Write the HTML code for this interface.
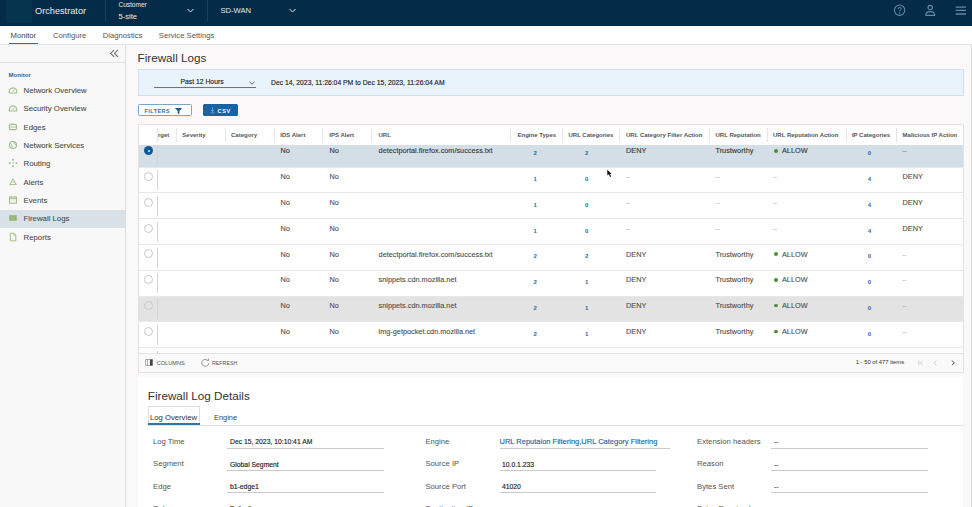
<!DOCTYPE html>
<html><head><meta charset="utf-8">
<style>
*{margin:0;padding:0;box-sizing:border-box}
html,body{width:972px;height:507px;overflow:hidden;background:#faf8f9;font-family:"Liberation Sans",sans-serif;color:#333}
.a{position:absolute;white-space:nowrap}
#hdr{position:absolute;left:0;top:0;width:972px;height:26px;background:#042b47}
#logo{position:absolute;left:6px;top:0;width:26px;height:23px;background:#05344f}
.hsep{position:absolute;top:0;width:1px;height:21px;background:#1d3f5a}
.ht{color:#e6ecf1}
#subnav{position:absolute;z-index:2;left:0;top:26px;width:972px;height:19px;background:#fff;border-bottom:1px solid #e4e4e4}
.sn{position:absolute;top:5px;font-size:7.7px;color:#555}
#side{position:absolute;left:0;top:44px;width:126px;height:463px;background:#f8f8f8;border-right:1px solid #ddd}
.si{position:absolute;left:0;width:125px;height:18px}
.si span{position:absolute;left:23.5px;top:4.6px;font-size:7.8px;color:#4a4a4a;-webkit-text-stroke-width:0.08px}
.si i{position:absolute;left:8px;top:3.5px;width:10px;height:10px}.si i svg{display:block}
.th{top:132px;font-size:6px;font-weight:bold;color:#555}
.td{font-size:7.3px;color:#4d4d4d;-webkit-text-stroke-width:0.1px}
.dd{font-size:5.8px;color:#4a4a4a;-webkit-text-stroke-width:0.1px}
.td.s{color:#333}
.tn{font-size:6px;font-weight:bold;color:#2a6aa3;text-align:center}
.ft{font-size:5.6px;color:#555}
.dl{font-size:7.7px;color:#555}
.dv{font-size:6.8px;color:#222;-webkit-text-stroke-width:0.14px}
.st{-webkit-text-stroke-width:0.14px}
</style></head><body>
<div id="hdr">
  <div id="logo"></div>
  <div class="a ht" style="left:35px;top:5.8px;font-size:9.2px">Orchestrator</div>
  <div class="hsep" style="left:105px"></div>
  <div class="a ht" style="left:118.5px;top:1px;font-size:6.5px">Customer</div>
  <div class="a ht" style="left:118.5px;top:11.5px;font-size:7.6px">5-site</div>
  <svg class="a" style="left:186px;top:7px" width="9" height="7" viewBox="0 0 9 7"><path d="M1.5 2 L4.5 5 L7.5 2" fill="none" stroke="#dfe6ec" stroke-width="1"/></svg>
  <div class="hsep" style="left:207px"></div>
  <div class="a ht" style="left:220.5px;top:5.6px;font-size:7.6px">SD-WAN</div>
  <svg class="a" style="left:288px;top:7px" width="9" height="7" viewBox="0 0 9 7"><path d="M1.5 2 L4.5 5 L7.5 2" fill="none" stroke="#dfe6ec" stroke-width="1"/></svg>
  <svg class="a" style="left:892px;top:3px" width="15" height="15" viewBox="0 0 15 15"><circle cx="7.6" cy="7.2" r="5.2" fill="none" stroke="#618ba8" stroke-width="1.1"/><path d="M6 6 Q6 4.4 7.6 4.4 Q9.2 4.4 9.2 5.8 Q9.2 6.8 7.7 7.4 L7.7 8.5" fill="none" stroke="#618ba8" stroke-width="1"/><circle cx="7.7" cy="10" r="0.65" fill="#618ba8"/></svg>
  <svg class="a" style="left:923px;top:3px" width="15" height="15" viewBox="0 0 15 15"><circle cx="7.2" cy="4.6" r="2.2" fill="none" stroke="#618ba8" stroke-width="1.1"/><path d="M2.7 12.4 Q2.7 8.6 7.2 8.6 Q11.7 8.6 11.7 12.4 Z" fill="none" stroke="#618ba8" stroke-width="1.1"/></svg>
  <svg class="a" style="left:955px;top:5px" width="12" height="11" viewBox="0 0 12 11"><path d="M0.7 2.1 H11 M0.7 5.4 H11 M0.7 9 H11" stroke="#618ba8" stroke-width="1.3"/></svg>
</div>
<div id="subnav">
  <div class="sn" style="left:10.5px;color:#444">Monitor</div>
  <div class="sn" style="left:53px">Configure</div>
  <div class="sn" style="left:102.7px">Diagnostics</div>
  <div class="sn" style="left:158.8px">Service Settings</div>
  <div class="a" style="left:9px;top:16.6px;width:29px;height:1.5px;background:#2f73ab"></div>
</div>
<div id="side">
  <svg class="a" style="left:108.5px;top:5px" width="11" height="9" viewBox="0 0 11 9"><path d="M5.2 0.9 L1.6 4.4 L5.2 7.9 M9 0.9 L5.4 4.4 L9 7.9" fill="none" stroke="#6a6a6a" stroke-width="1.05"/></svg>
  <div class="a" style="left:0;top:18px;width:125px;height:1px;background:#e3e3e3"></div>
  <div class="a" style="left:8.5px;top:27px;font-size:6.1px;font-weight:bold;color:#2a66a0">Monitor</div>
  <div class="si" style="top:37.50px"><i><svg width="10" height="10" viewBox="0 0 10 10"><path d="M1.3 8 A3.9 3.9 0 1 1 8.7 8 Z" fill="none" stroke="#a2c08a" stroke-width="1.1"/><path d="M4.9 6.6 L6.6 4.6" stroke="#a2c08a" stroke-width="1"/></svg></i><span>Network Overview</span></div>
  <div class="si" style="top:55.83px"><i><svg width="10" height="10" viewBox="0 0 10 10"><path d="M1.3 8 A3.9 3.9 0 1 1 8.7 8 Z" fill="none" stroke="#a2c08a" stroke-width="1.1"/><path d="M4.9 6.6 L6.6 4.6" stroke="#a2c08a" stroke-width="1"/></svg></i><span>Security Overview</span></div>
  <div class="si" style="top:74.16px"><i><svg width="10" height="10" viewBox="0 0 10 10"><rect x="1.3" y="2.4" width="7.2" height="5.2" rx="1" fill="none" stroke="#a2c08a" stroke-width="1.1"/><path d="M1.5 5 H8.3" stroke="#a2c08a" stroke-width="0.9"/></svg></i><span>Edges</span></div>
  <div class="si" style="top:92.49px"><i><svg width="10" height="10" viewBox="0 0 10 10"><circle cx="5" cy="5" r="3.5" fill="none" stroke="#a2c08a" stroke-width="1.2"/><path d="M2.5 3.5 Q5 5 4 8 M5.5 1.8 Q6 4 8.3 5" fill="none" stroke="#a2c08a" stroke-width="1"/></svg></i><span>Network Services</span></div>
  <div class="si" style="top:110.82px"><i><svg width="10" height="10" viewBox="0 0 10 10"><circle cx="5" cy="1.8" r="1" fill="#a2c08a"/><circle cx="5" cy="8.2" r="1" fill="#a2c08a"/><circle cx="1.6" cy="5" r="1" fill="#a2c08a"/><circle cx="8.4" cy="5" r="1" fill="#a2c08a"/><circle cx="5" cy="5" r="0.7" fill="#a2c08a"/></svg></i><span>Routing</span></div>
  <div class="si" style="top:129.15px"><i><svg width="10" height="10" viewBox="0 0 10 10"><path d="M5 1.8 L8.3 7.6 H1.7 Z" fill="none" stroke="#a2c08a" stroke-width="1"/><path d="M5 4.2 V5.9" stroke="#a2c08a" stroke-width="0.8"/></svg></i><span>Alerts</span></div>
  <div class="si" style="top:147.48px"><i><svg width="10" height="10" viewBox="0 0 10 10"><rect x="1.5" y="2" width="7" height="6.3" fill="#eef2e6" stroke="#a2c08a" stroke-width="1"/><path d="M1.5 3.6 H8.5 M3.2 1 V2.6 M6.8 1 V2.6" stroke="#a2c08a" stroke-width="0.9"/></svg></i><span>Events</span></div>
  <div class="si" style="top:165.81px;background:#d9e1e8"><i><svg width="10" height="10" viewBox="0 0 10 10"><rect x="1.3" y="2.3" width="7.4" height="5.4" fill="#86ab62"/><path d="M1.3 4.1 H8.7 M1.3 5.9 H8.7 M3.6 2.3 V4.1 M6.3 2.3 V4.1 M5 4.1 V5.9 M3.6 5.9 V7.7 M6.3 5.9 V7.7" stroke="#b9cfa1" stroke-width="0.5"/></svg></i><span>Firewall Logs</span></div>
  <div class="si" style="top:184.14px"><i><svg width="10" height="10" viewBox="0 0 10 10"><path d="M2.3 1.2 H6 L7.8 3 V8.8 H2.3 Z" fill="none" stroke="#a2c08a" stroke-width="1"/><path d="M5.8 1.2 V3.2 H7.8" fill="none" stroke="#a2c08a" stroke-width="0.8"/></svg></i><span>Reports</span></div>
</div>
<div id="main">
  <div class="a" style="left:137.5px;top:51px;font-size:11.7px;color:#333">Firewall Logs</div>
  <div class="a" style="left:138px;top:69px;width:826px;height:27px;background:#e9f3fc;border:1px solid #cfdfec"></div>
  <div class="a st" style="left:180.5px;top:78px;font-size:6.8px;color:#222">Past 12 Hours</div>
  <div class="a" style="left:154px;top:86.5px;width:102px;height:1px;background:#6f7478"></div>
  <svg class="a" style="left:248px;top:79.5px" width="8" height="6" viewBox="0 0 8 6"><path d="M1.5 1.8 L4 4.2 L6.5 1.8" fill="none" stroke="#555" stroke-width="0.9"/></svg>
  <div class="a st" style="left:271px;top:78.8px;font-size:6.8px;color:#222">Dec 14, 2023, 11:26:04 PM to Dec 15, 2023, 11:26:04 AM</div>
  <div class="a" style="left:138px;top:104px;width:54px;height:12px;border:1px solid #7fa5c6;border-radius:1.5px;background:#fff"></div>
  <div class="a" style="left:144.5px;top:107.5px;font-size:5.4px;font-weight:bold;color:#2f6ea5;letter-spacing:0.5px">FILTERS</div>
  <svg class="a" style="left:173.5px;top:107px" width="9" height="9" viewBox="0 0 9 9"><path d="M0.9 1 H8.2 L5.4 4 V6.8 L3.7 6.8 V4 Z" fill="#1e5a8e"/></svg>
  <div class="a" style="left:202.5px;top:104px;width:35.5px;height:12px;background:#1863a2;border-radius:1.5px"></div>
  <svg class="a" style="left:209px;top:106px" width="7" height="8" viewBox="0 0 7 8"><path d="M3.5 1.2 V5.6 M1.9 4 L3.5 5.6 L5.1 4 M1.4 6.9 H5.6" fill="none" stroke="#8db2d4" stroke-width="0.7"/></svg>
  <div class="a" style="left:217.5px;top:107.5px;font-size:5.6px;font-weight:bold;color:#fff;letter-spacing:0.6px">CSV</div>
<div class="a" style="left:971px;top:45px;width:1px;height:462px;background:#dadada"></div>
<div class="a" style="left:138px;top:124px;width:825.5px;height:248.5px;background:#fff;border:1px solid #e3e3e3"></div>
<div class="a" style="left:157px;top:128px;width:1px;height:14px;background:#e6e6e6"></div>
<div class="a" style="left:176px;top:128px;width:1px;height:14px;background:#e6e6e6"></div>
<div class="a" style="left:224.5px;top:128px;width:1px;height:14px;background:#e6e6e6"></div>
<div class="a" style="left:273.5px;top:128px;width:1px;height:14px;background:#e6e6e6"></div>
<div class="a" style="left:322px;top:128px;width:1px;height:14px;background:#e6e6e6"></div>
<div class="a" style="left:371px;top:128px;width:1px;height:14px;background:#e6e6e6"></div>
<div class="a" style="left:510px;top:128px;width:1px;height:14px;background:#e6e6e6"></div>
<div class="a" style="left:562px;top:128px;width:1px;height:14px;background:#e6e6e6"></div>
<div class="a" style="left:619px;top:128px;width:1px;height:14px;background:#e6e6e6"></div>
<div class="a" style="left:709px;top:128px;width:1px;height:14px;background:#e6e6e6"></div>
<div class="a" style="left:767px;top:128px;width:1px;height:14px;background:#e6e6e6"></div>
<div class="a" style="left:846px;top:128px;width:1px;height:14px;background:#e6e6e6"></div>
<div class="a" style="left:896px;top:128px;width:1px;height:14px;background:#e6e6e6"></div>
<div class="a th" style="left:158px">rget</div>
<div class="a th" style="left:182.3px">Severity</div>
<div class="a th" style="left:231px">Category</div>
<div class="a th" style="left:280.3px">IDS Alert</div>
<div class="a th" style="left:329.3px">IPS Alert</div>
<div class="a th" style="left:378.5px">URL</div>
<div class="a th" style="left:511px;width:51.60000000000002px;text-align:center">Engine Types</div>
<div class="a th" style="left:562.6px;width:56.69999999999993px;text-align:center">URL Categories</div>
<div class="a th" style="left:626px">URL Category Filter Action</div>
<div class="a th" style="left:715.5px">URL Reputation</div>
<div class="a th" style="left:773px">URL Reputation Action</div>
<div class="a th" style="left:846px;width:50px;text-align:center">IP Categories</div>
<div class="a th" style="left:902.6px">Malicious IP Action</div>
<div class="a" style="left:139px;top:144.7px;width:823.5px;height:22.900000000000034px;background:#d4dee6;border-bottom:1px solid #e8e8e8"></div>
<div class="a" style="left:157px;top:144.7px;width:1px;height:19.600000000000033px;background:#d4d4d4"></div>
<div class="a" style="left:144.0px;top:146.10000000000002px;width:9px;height:9px;border-radius:50%;background:#0f5a98"></div>
<div class="a" style="left:147.5px;top:149.60000000000002px;width:2px;height:2px;border-radius:50%;background:#e8eef4"></div>
<div class="a td s" style="left:280.4px;top:146.4px">No</div>
<div class="a td s" style="left:329.4px;top:146.4px">No</div>
<div class="a td s" style="left:378.6px;top:146.4px">detectportal.firefox.com/success.txt</div>
<div class="a tn" style="left:525.1px;width:20px;top:150.20000000000002px">2</div>
<div class="a tn" style="left:576.6px;width:20px;top:150.20000000000002px">2</div>
<div class="a td s" style="left:626px;top:146.4px">DENY</div>
<div class="a td s" style="left:715.5px;top:146.4px">Trustworthy</div>
<div class="a" style="left:774px;top:148.90000000000003px;width:3.8px;height:3.8px;border-radius:50%;background:#4b8f35"></div>
<div class="a td s" style="left:782px;top:146.4px">ALLOW</div>
<div class="a tn" style="left:859.3px;width:20px;top:150.20000000000002px">0</div>
<div class="a dd" style="left:902.6px;top:148.4px;color:#444">--</div>
<div class="a" style="left:139px;top:167.60000000000002px;width:823.5px;height:25.80000000000001px;background:#fff;border-bottom:1px solid #e8e8e8"></div>
<div class="a" style="left:157px;top:170.20000000000002px;width:1px;height:19.900000000000016px;background:#d4d4d4"></div>
<div class="a" style="left:144.0px;top:171.90000000000003px;width:9px;height:9px;border-radius:50%;border:1px solid #c9c9c9"></div>
<div class="a td" style="left:280.4px;top:172.20000000000002px">No</div>
<div class="a td" style="left:329.4px;top:172.20000000000002px">No</div>
<div class="a tn" style="left:525.1px;width:20px;top:176.00000000000003px">1</div>
<div class="a tn" style="left:576.6px;width:20px;top:176.00000000000003px">0</div>
<div class="a dd" style="left:626px;top:174.20000000000002px;color:#8a8a8a">--</div>
<div class="a dd" style="left:715.5px;top:174.20000000000002px;color:#8a8a8a">--</div>
<div class="a dd" style="left:773px;top:174.20000000000002px;color:#8a8a8a">--</div>
<div class="a tn" style="left:859.3px;width:20px;top:176.00000000000003px">4</div>
<div class="a td" style="left:902.6px;top:172.20000000000002px">DENY</div>
<div class="a" style="left:139px;top:193.4px;width:823.5px;height:25.80000000000001px;background:#fff;border-bottom:1px solid #e8e8e8"></div>
<div class="a" style="left:157px;top:196.0px;width:1px;height:19.900000000000016px;background:#d4d4d4"></div>
<div class="a" style="left:144.0px;top:197.70000000000002px;width:9px;height:9px;border-radius:50%;border:1px solid #c9c9c9"></div>
<div class="a td" style="left:280.4px;top:198.0px">No</div>
<div class="a td" style="left:329.4px;top:198.0px">No</div>
<div class="a tn" style="left:525.1px;width:20px;top:201.8px">1</div>
<div class="a tn" style="left:576.6px;width:20px;top:201.8px">0</div>
<div class="a dd" style="left:626px;top:200.0px;color:#8a8a8a">--</div>
<div class="a dd" style="left:715.5px;top:200.0px;color:#8a8a8a">--</div>
<div class="a dd" style="left:773px;top:200.0px;color:#8a8a8a">--</div>
<div class="a tn" style="left:859.3px;width:20px;top:201.8px">4</div>
<div class="a td" style="left:902.6px;top:198.0px">DENY</div>
<div class="a" style="left:139px;top:219.20000000000002px;width:823.5px;height:25.80000000000001px;background:#fff;border-bottom:1px solid #e8e8e8"></div>
<div class="a" style="left:157px;top:221.8px;width:1px;height:19.900000000000016px;background:#d4d4d4"></div>
<div class="a" style="left:144.0px;top:223.50000000000003px;width:9px;height:9px;border-radius:50%;border:1px solid #c9c9c9"></div>
<div class="a td" style="left:280.4px;top:223.8px">No</div>
<div class="a td" style="left:329.4px;top:223.8px">No</div>
<div class="a tn" style="left:525.1px;width:20px;top:227.60000000000002px">1</div>
<div class="a tn" style="left:576.6px;width:20px;top:227.60000000000002px">0</div>
<div class="a dd" style="left:626px;top:225.8px;color:#8a8a8a">--</div>
<div class="a dd" style="left:715.5px;top:225.8px;color:#8a8a8a">--</div>
<div class="a dd" style="left:773px;top:225.8px;color:#8a8a8a">--</div>
<div class="a tn" style="left:859.3px;width:20px;top:227.60000000000002px">4</div>
<div class="a td" style="left:902.6px;top:223.8px">DENY</div>
<div class="a" style="left:139px;top:245.0px;width:823.5px;height:25.80000000000001px;background:#fff;border-bottom:1px solid #e8e8e8"></div>
<div class="a" style="left:157px;top:247.6px;width:1px;height:19.900000000000016px;background:#d4d4d4"></div>
<div class="a" style="left:144.0px;top:249.3px;width:9px;height:9px;border-radius:50%;border:1px solid #c9c9c9"></div>
<div class="a td" style="left:280.4px;top:249.6px">No</div>
<div class="a td" style="left:329.4px;top:249.6px">No</div>
<div class="a td" style="left:378.6px;top:249.6px">detectportal.firefox.com/success.txt</div>
<div class="a tn" style="left:525.1px;width:20px;top:253.4px">2</div>
<div class="a tn" style="left:576.6px;width:20px;top:253.4px">2</div>
<div class="a td" style="left:626px;top:249.6px">DENY</div>
<div class="a td" style="left:715.5px;top:249.6px">Trustworthy</div>
<div class="a" style="left:774px;top:252.10000000000002px;width:3.8px;height:3.8px;border-radius:50%;background:#4b8f35"></div>
<div class="a td" style="left:782px;top:249.6px">ALLOW</div>
<div class="a tn" style="left:859.3px;width:20px;top:253.4px">0</div>
<div class="a dd" style="left:902.6px;top:251.6px;color:#8a8a8a">--</div>
<div class="a" style="left:139px;top:270.8px;width:823.5px;height:25.80000000000001px;background:#fff;border-bottom:1px solid #e8e8e8"></div>
<div class="a" style="left:157px;top:273.40000000000003px;width:1px;height:19.899999999999988px;background:#d4d4d4"></div>
<div class="a" style="left:144.0px;top:275.1px;width:9px;height:9px;border-radius:50%;border:1px solid #c9c9c9"></div>
<div class="a td" style="left:280.4px;top:275.40000000000003px">No</div>
<div class="a td" style="left:329.4px;top:275.40000000000003px">No</div>
<div class="a td" style="left:378.6px;top:275.40000000000003px">snippets.cdn.mozilla.net</div>
<div class="a tn" style="left:525.1px;width:20px;top:279.20000000000005px">2</div>
<div class="a tn" style="left:576.6px;width:20px;top:279.20000000000005px">1</div>
<div class="a td" style="left:626px;top:275.40000000000003px">DENY</div>
<div class="a td" style="left:715.5px;top:275.40000000000003px">Trustworthy</div>
<div class="a" style="left:774px;top:277.90000000000003px;width:3.8px;height:3.8px;border-radius:50%;background:#4b8f35"></div>
<div class="a td" style="left:782px;top:275.40000000000003px">ALLOW</div>
<div class="a tn" style="left:859.3px;width:20px;top:279.20000000000005px">0</div>
<div class="a dd" style="left:902.6px;top:277.40000000000003px;color:#8a8a8a">--</div>
<div class="a" style="left:139px;top:296.6px;width:823.5px;height:25.80000000000001px;background:#e3e3e3;border-bottom:1px solid #e8e8e8"></div>
<div class="a" style="left:157px;top:299.20000000000005px;width:1px;height:19.899999999999988px;background:#d4d4d4"></div>
<div class="a" style="left:144.0px;top:300.90000000000003px;width:9px;height:9px;border-radius:50%;border:1px solid #c9c9c9"></div>
<div class="a td" style="left:280.4px;top:301.20000000000005px">No</div>
<div class="a td" style="left:329.4px;top:301.20000000000005px">No</div>
<div class="a td" style="left:378.6px;top:301.20000000000005px">snippets.cdn.mozilla.net</div>
<div class="a tn" style="left:525.1px;width:20px;top:305.00000000000006px">2</div>
<div class="a tn" style="left:576.6px;width:20px;top:305.00000000000006px">1</div>
<div class="a td" style="left:626px;top:301.20000000000005px">DENY</div>
<div class="a td" style="left:715.5px;top:301.20000000000005px">Trustworthy</div>
<div class="a" style="left:774px;top:303.70000000000005px;width:3.8px;height:3.8px;border-radius:50%;background:#4b8f35"></div>
<div class="a td" style="left:782px;top:301.20000000000005px">ALLOW</div>
<div class="a tn" style="left:859.3px;width:20px;top:305.00000000000006px">0</div>
<div class="a dd" style="left:902.6px;top:303.20000000000005px;color:#8a8a8a">--</div>
<div class="a" style="left:139px;top:322.4px;width:823.5px;height:25.80000000000001px;background:#fff;border-bottom:1px solid #e8e8e8"></div>
<div class="a" style="left:157px;top:325.0px;width:1px;height:19.899999999999988px;background:#d4d4d4"></div>
<div class="a" style="left:144.0px;top:326.7px;width:9px;height:9px;border-radius:50%;border:1px solid #c9c9c9"></div>
<div class="a td" style="left:280.4px;top:327.0px">No</div>
<div class="a td" style="left:329.4px;top:327.0px">No</div>
<div class="a td" style="left:378.6px;top:327.0px">img-getpocket.cdn.mozilla.net</div>
<div class="a tn" style="left:525.1px;width:20px;top:330.8px">2</div>
<div class="a tn" style="left:576.6px;width:20px;top:330.8px">1</div>
<div class="a td" style="left:626px;top:327.0px">DENY</div>
<div class="a td" style="left:715.5px;top:327.0px">Trustworthy</div>
<div class="a" style="left:774px;top:329.5px;width:3.8px;height:3.8px;border-radius:50%;background:#4b8f35"></div>
<div class="a td" style="left:782px;top:327.0px">ALLOW</div>
<div class="a tn" style="left:859.3px;width:20px;top:330.8px">0</div>
<div class="a dd" style="left:902.6px;top:329.0px;color:#8a8a8a">--</div>
<div class="a" style="left:157px;top:350.5px;width:1px;height:2px;background:#d4d4d4"></div>
<div class="a" style="left:139px;top:352.5px;width:823.5px;height:19px;background:#fafafa;border-top:1px solid #e3e3e3"></div>
<svg class="a" style="left:145px;top:359px" width="8" height="7" viewBox="0 0 8 7"><path d="M0.6 0.5 H7.5 V6.5 H0.6 Z M2.6 0.5 V6.5" fill="none" stroke="#888" stroke-width="0.7"/><rect x="5" y="0.5" width="2.5" height="6" fill="#444"/></svg>
<div class="a ft" style="left:156.7px;top:359.8px">COLUMNS</div>
<svg class="a" style="left:200.5px;top:358px" width="9" height="9" viewBox="0 0 9 9"><path d="M7.8 4.9 A3.5 3.5 0 1 1 6.2 1.9" fill="none" stroke="#777" stroke-width="0.75"/><path d="M7.6 0.6 V2.6 H5.6" fill="none" stroke="#777" stroke-width="0.75"/></svg>
<div class="a ft" style="left:211.9px;top:359.8px;font-size:5.35px">REFRESH</div>
<div class="a" style="left:855.7px;top:359.3px;font-size:5.85px;color:#333">1 - 50 of 477 items</div>
<svg class="a" style="left:916px;top:358px" width="10" height="10" viewBox="0 0 10 10"><path d="M2.8 2.6 V7.2 M6.6 2.6 L4.4 4.9 L6.6 7.2" fill="none" stroke="#c4c4c4" stroke-width="0.8"/></svg>
<svg class="a" style="left:929.5px;top:358px" width="10" height="10" viewBox="0 0 10 10"><path d="M6.3 2.6 L4.1 4.9 L6.3 7.2" fill="none" stroke="#c4c4c4" stroke-width="0.8"/></svg>
<svg class="a" style="left:948px;top:358px" width="10" height="10" viewBox="0 0 10 10"><path d="M4.1 2.6 L6.3 4.9 L4.1 7.2" fill="none" stroke="#444" stroke-width="1"/></svg>
<div class="a" style="left:138px;top:377px;width:825px;height:130px;background:#fff"></div>
<div class="a" style="left:147.8px;top:388.5px;font-size:11.7px;color:#333">Firewall Log Details</div>
<div class="a" style="left:147.5px;top:424.5px;width:816.5px;height:1px;background:#e3e3e3"></div>
<div class="a" style="left:147.5px;top:406px;width:52.5px;height:19px;border:1px solid #ddd;border-bottom:none"></div>
<div class="a" style="left:147.5px;top:423px;width:52.5px;height:2px;background:#2f73ab"></div>
<div class="a" style="left:150px;top:413px;font-size:7.7px;color:#333">Log Overview</div>
<div class="a" style="left:214px;top:413px;font-size:7.4px;color:#444">Engine</div>
<div class="a dl" style="left:153px;top:437.0px">Log Time</div>
<div class="a dv" style="left:230px;top:438.20000000000005px">Dec 15, 2023, 10:10:41 AM</div>
<div class="a" style="left:227.3px;top:447.6px;width:157.09999999999997px;height:1px;background:#c9c9c9"></div>
<div class="a dl" style="left:425.4px;top:437.0px">Engine</div>
<div class="a dv" style="left:499.5px;top:437.40000000000003px;color:#1f66a6;font-size:7.5px">URL Reputaion Filtering,URL Category Filtering</div>
<div class="a" style="left:499.5px;top:447.6px;width:170px;height:1px;background:#c9c9c9"></div>
<div class="a dl" style="left:697px;top:437.0px">Extension headers</div>
<div class="a dv" style="left:774px;top:438.20000000000005px">--</div>
<div class="a" style="left:771px;top:447.6px;width:157px;height:1px;background:#c9c9c9"></div>
<div class="a dl" style="left:153px;top:459.4px">Segment</div>
<div class="a dv" style="left:230px;top:460.6px">Global Segment</div>
<div class="a" style="left:227.3px;top:470.0px;width:157.09999999999997px;height:1px;background:#c9c9c9"></div>
<div class="a dl" style="left:425.4px;top:459.4px">Source IP</div>
<div class="a dv" style="left:502px;top:460.6px">10.0.1.233</div>
<div class="a" style="left:499.5px;top:470.0px;width:156.5px;height:1px;background:#c9c9c9"></div>
<div class="a dl" style="left:697px;top:459.4px">Reason</div>
<div class="a dv" style="left:774px;top:460.6px">--</div>
<div class="a" style="left:771px;top:470.0px;width:157px;height:1px;background:#c9c9c9"></div>
<div class="a dl" style="left:153px;top:481.8px">Edge</div>
<div class="a dv" style="left:230px;top:483.00000000000006px">b1-edge1</div>
<div class="a" style="left:227.3px;top:492.40000000000003px;width:157.09999999999997px;height:1px;background:#c9c9c9"></div>
<div class="a dl" style="left:425.4px;top:481.8px">Source Port</div>
<div class="a dv" style="left:502px;top:483.00000000000006px">41020</div>
<div class="a" style="left:499.5px;top:492.40000000000003px;width:156.5px;height:1px;background:#c9c9c9"></div>
<div class="a dl" style="left:697px;top:481.8px">Bytes Sent</div>
<div class="a dv" style="left:774px;top:483.00000000000006px">--</div>
<div class="a" style="left:771px;top:492.40000000000003px;width:157px;height:1px;background:#c9c9c9"></div>
<div class="a dl" style="left:153px;top:504.2px">Rule</div>
<div class="a dv" style="left:230px;top:505.40000000000003px">Default</div>
<div class="a" style="left:227.3px;top:514.8px;width:157.09999999999997px;height:1px;background:#c9c9c9"></div>
<div class="a dl" style="left:425.4px;top:504.2px">Destination IP</div>
<div class="a dv" style="left:502px;top:505.40000000000003px">--</div>
<div class="a" style="left:499.5px;top:514.8px;width:156.5px;height:1px;background:#c9c9c9"></div>
<div class="a dl" style="left:697px;top:504.2px">Bytes Received</div>
<div class="a dv" style="left:774px;top:505.40000000000003px">--</div>
<div class="a" style="left:771px;top:514.8px;width:157px;height:1px;background:#c9c9c9"></div>
<svg class="a" style="left:606px;top:168.5px" width="8" height="10" viewBox="0 0 8 10"><path d="M1.2 0.8 L1.4 6.6 L2.8 5.3 L4.2 8 L5.2 7.5 L4 5 L5.6 4.8 Z" fill="#111"/></svg>
</div>
</body></html>
